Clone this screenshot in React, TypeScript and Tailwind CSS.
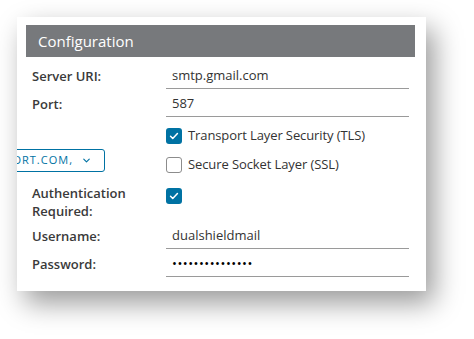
import { ChevronDown } from "lucide-react";

const font = { fontFamily: '"Open Sans", "Liberation Sans", sans-serif' };

const Check = () => (
  <svg viewBox="0 0 16 16" className="w-[10px] h-[10px]" fill="none">
    <path d="M2.5 8.5l3.5 3.5 7.5-8" stroke="white" strokeWidth="2.4" strokeLinecap="round" strokeLinejoin="round" />
  </svg>
);

const Box = ({ checked }: { checked: boolean }) =>
  checked ? (
    <div className="w-[16px] h-[16px] shrink-0 rounded-[3px] bg-[#0072a3] flex items-center justify-center">
      <Check />
    </div>
  ) : (
    <div className="w-[16px] h-[16px] shrink-0 rounded-[3px] border border-[#8c8c8c] bg-white"></div>
  );

const Field = ({ label, value, className = "" }: { label: string; value: string; className?: string }) => (
  <div className={`flex items-center ${className}`}>
    <div className="w-[134px] text-[13px] font-semibold text-[#3a3a3a]">{label}</div>
    <div className="w-[243px] h-[25px] border-b border-[#9a9a9a] pl-[6px] flex items-center text-[13px] text-[#333]">
      {value}
    </div>
  </div>
);

export default function App() {
  return (
    <div className="w-[474px] h-[339px] bg-white overflow-hidden pt-[17px] pl-[17px]" style={font}>
      <div className="relative w-[409px] h-[274px] bg-white overflow-hidden shadow-[8px_12px_26px_rgba(0,0,0,0.4)]">
        {/* Header */}
        <div className="mt-[8px] ml-[9px] w-[389px] h-[32px] bg-[#77797c] flex items-center pl-[12px] text-[15px] text-white">
          Configuration
        </div>

        <div className="pl-[15px]">
          <Field label="Server URI:" value="smtp.gmail.com" className="mt-[7px]" />
          <Field label="Port:" value="587" className="mt-[3px]" />

          {/* TLS / SSL */}
          <div className="ml-[134px] mt-[11px] flex items-center gap-[6px] text-[13px] tracking-[-0.1px] text-[#333] h-[16px]">
            <Box checked />
            <span>Transport Layer Security (TLS)</span>
          </div>
          <div className="ml-[134px] mt-[13px] flex items-center gap-[6px] text-[13px] tracking-[-0.1px] text-[#333] h-[16px]">
            <Box checked={false} />
            <span>Secure Socket Layer (SSL)</span>
          </div>

          {/* Authentication */}
          <div className="mt-[11px] flex items-start">
            <div className="w-[134px] text-[13px] leading-[18px] font-semibold text-[#3a3a3a]">
              Authentication
              <br />
              Required:
            </div>
            <div className="mt-[4px]">
              <Box checked />
            </div>
          </div>

          <Field label="Username:" value="dualshieldmail" className="mt-[4px]" />
          <div className="flex items-center mt-[3px]">
            <div className="w-[134px] text-[13px] font-semibold text-[#3a3a3a]">Password:</div>
            <div className="w-[243px] h-[25px] border-b border-[#9a9a9a] pl-[6px] flex items-center text-[13px] text-black tracking-[0.5px]">
              •••••••••••••••
            </div>
          </div>
        </div>

        {/* Overlapping dropdown, clipped by the card edge */}
        <div className="absolute left-[-40px] top-[132px] w-[128px] h-[23px] border border-[#0072a3] rounded-[3px] flex items-center justify-end pr-[12px] gap-[8px] text-[11px] tracking-[1px] text-[#0072a3]">
          <span>ORT.COM,</span>
          <ChevronDown className="w-[11px] h-[11px]" strokeWidth={2.5} />
        </div>
      </div>
    </div>
  );
}
